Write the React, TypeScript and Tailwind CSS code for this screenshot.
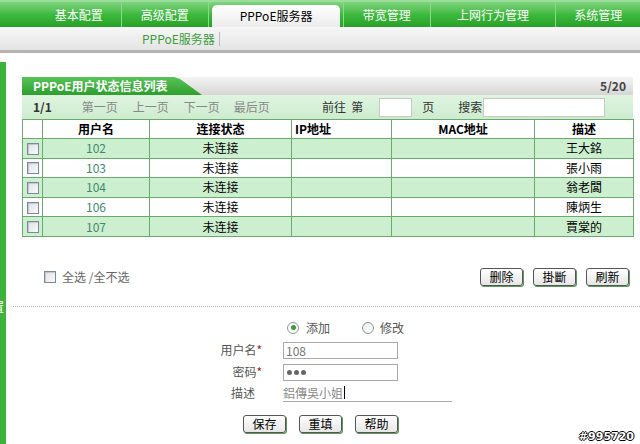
import React from "react";

const F = { fontFamily: '"Noto Sans CJK SC","Noto Sans",sans-serif' };

function Box() {
  return (
    <span className="inline-block w-[12px] h-[12px] border border-[#7a8a99] bg-gradient-to-br from-[#dfe3e8] to-[#f8f9fa] shadow-[inset_1px_1px_1px_rgba(0,0,0,0.15)]" />
  );
}

function Btn({ t }: { t: string }) {
  return (
    <button className="w-[43px] h-[18px] flex items-center justify-center text-[12px] leading-none text-black border border-[#555] rounded-[3px] bg-gradient-to-b from-white to-[#e6e6e6] shadow-[1px_1px_0_#5a9a5a]">
      {t}
    </button>
  );
}

const rows = [
  { u: "102", d: "王大銘", g: true },
  { u: "103", d: "張小雨", g: false },
  { u: "104", d: "翁老闆", g: true },
  { u: "106", d: "陳炳生", g: false },
  { u: "107", d: "賈棠的", g: true },
];

export default function App() {
  const tabs = [
    { t: "基本配置", w: "w-[123px] pl-[37px]" },
    { t: "高级配置", w: "w-[89px]" },
  ];
  return (
    <div className="relative w-[640px] h-[444px] overflow-hidden bg-white text-[12px]" style={F}>
      {/* top nav */}
      <div className="h-[27px] flex bg-gradient-to-b from-[#7fd37f] via-[#3dba3d] to-[#27a127] border-t-[2px] border-[#9adf9a]">
        {tabs.map((x) => (
          <div key={x.t} className={`${x.w} h-full flex items-center justify-center text-white text-[12px] border-r border-[#8ad88a]`}>
            {x.t}
          </div>
        ))}
        <div className="w-[130px] ml-[3px] mr-[3px] mt-[3px] rounded-t-[5px] bg-gradient-to-b from-white to-[#ececec] flex items-center justify-center text-black text-[12px]">
          PPPoE服务器
        </div>
        <div className="w-[89px] h-full flex items-center justify-center text-white text-[12px] border-l border-r border-[#8ad88a]">
          带宽管理
        </div>
        <div className="w-[128px] h-full flex items-center justify-center text-white text-[12px] border-r border-[#8ad88a]">
          上网行为管理
        </div>
        <div className="w-[85px] h-full flex items-center justify-center text-white text-[12px]">
          系统管理
        </div>
      </div>
      {/* sub nav */}
      <div className="h-[26px] flex items-center bg-gradient-to-b from-[#f7f7f7] to-[#e4e4e4] border-b-[3px] border-[#b4b4b4]">
        <span className="ml-[142px] text-[#3a9e3a] text-[12px]">PPPoE服务器</span>
        <span className="ml-[4px] w-px h-[14px] bg-[#bbb]" />
      </div>
      {/* body */}
      <div className="flex h-[391px]">
        <div className="w-[6px] mt-[9px] bg-[#3cb43c] overflow-hidden flex flex-col">
          <span className="mt-[12px] ml-[-7px] text-white text-[12px] leading-none">4</span>
          <span className="mt-[215px] ml-[-8px] text-white text-[12px] leading-none">置</span>
        </div>
        <div className="flex-1 flex flex-col">
          {/* panel */}
          <div className="ml-[16px] mt-[24px] w-[611px]">
            <div className="h-[18px] flex bg-gradient-to-b from-[#f4f4f4] to-[#d6d6d6]">
              <div
                className="w-[180px] h-full bg-gradient-to-b from-[#58c458] to-[#2c9f2c] text-white font-bold text-[12px] flex items-center pl-[11px]"
                style={{ clipPath: "polygon(0 0, 152px 0, 158px 2px, 180px 100%, 0 100%)" }}
              >
                PPPoE用户状态信息列表
              </div>
              <div className="flex-1 flex items-center justify-end pr-[7px] font-bold text-[#444]">5/20</div>
            </div>
            <div className="h-[24px] flex items-center bg-gradient-to-b from-[#dff4e0] to-[#cdeccf] text-[12px]">
              <span className="ml-[11px] font-bold text-[#333]">1/1</span>
              <span className="ml-[30px] text-[#888]">第一页</span>
              <span className="ml-[15px] text-[#888]">上一页</span>
              <span className="ml-[15px] text-[#888]">下一页</span>
              <span className="ml-[14px] text-[#888]">最后页</span>
              <span className="ml-[52px] text-[#333]">前往&nbsp;&nbsp;第</span>
              <span className="ml-[16px] w-[33px] h-[19px] bg-white border border-[#c8c8c8]" />
              <span className="ml-[10px] text-[#333]">页</span>
              <span className="ml-[24px] text-[#333]">搜索</span>
              <span className="ml-[1px] w-[122px] h-[19px] bg-white border border-[#c8c8c8]" />
            </div>
            <table className="w-[611px] border-collapse border border-[#6aaa6a] table-fixed">
              <colgroup>
                <col className="w-[20px]" />
                <col className="w-[107px]" />
                <col className="w-[142px]" />
                <col className="w-[100px]" />
                <col className="w-[143px]" />
                <col className="w-[99px]" />
              </colgroup>
              <thead>
                <tr className="h-[19px] bg-white">
                  {["", "用户名", "连接状态", "IP地址", "MAC地址", "描述"].map((h, i) => (
                    <th key={i} className={`border border-[#6aaa6a] p-0 font-bold text-[12px] text-black leading-none ${i === 3 ? "text-left pl-[3px]" : "text-center"}`}>
                      {h}
                    </th>
                  ))}
                </tr>
              </thead>
              <tbody>
                {rows.map((r) => (
                  <tr key={r.u} className={`h-[19.6px] ${r.g ? "bg-[#ccefcf]" : "bg-white"}`}>
                    <td className="border border-[#6aaa6a] p-0 text-center leading-none">
                      <span className="inline-flex mt-[2px]"><Box /></span>
                    </td>
                    <td className="border border-[#6aaa6a] p-0 text-center text-[#3f8a6c] leading-none">{r.u}</td>
                    <td className="border border-[#6aaa6a] p-0 text-center text-black leading-none">未连接</td>
                    <td className="border border-[#6aaa6a] p-0" />
                    <td className="border border-[#6aaa6a] p-0" />
                    <td className="border border-[#6aaa6a] p-0 text-center text-black leading-none">{r.d}</td>
                  </tr>
                ))}
              </tbody>
            </table>
            <div className="mt-[31px] h-[18px] flex items-center">
              <span className="ml-[22px] inline-flex"><Box /></span>
              <span className="ml-[6px] text-[#666]">全选 /全不选</span>
              <div className="ml-auto flex gap-[10px] mr-[4px]">
                <Btn t="删除" />
                <Btn t="掛斷" />
                <Btn t="刷新" />
              </div>
            </div>
          </div>
          {/* dotted divider */}
          <div className="ml-[7px] mt-[20px] border-t border-dotted border-[#a9b9a9]" />
          {/* radios */}
          <div className="mt-[14px] h-[14px] flex items-center pl-[281px] text-[#555]">
            <span className="w-[12px] h-[12px] rounded-full border border-[#8a9a8a] bg-white flex items-center justify-center">
              <span className="w-[5px] h-[5px] rounded-full bg-[#3c9a3c]" />
            </span>
            <span className="ml-[7px]">添加</span>
            <span className="ml-[32px] w-[12px] h-[12px] rounded-full border border-[#8a9a8a] bg-gradient-to-br from-[#e8ebee] to-white" />
            <span className="ml-[6px]">修改</span>
          </div>
          {/* form */}
          <div className="mt-[7px] flex flex-col text-[#555]">
            <div className="h-[17px] flex items-center">
              <span className="w-[256px] text-right">用户名<span className="text-[#b01818]">*</span></span>
              <span className="ml-[21px] w-[115px] h-[17px] border border-[#a9a9a9] bg-white text-[#777] pl-[2px] leading-[15px]">108</span>
            </div>
            <div className="mt-[5px] h-[17px] flex items-center">
              <span className="w-[256px] text-right">密码<span className="text-[#b01818]">*</span></span>
              <span className="ml-[21px] w-[115px] h-[17px] border border-[#a9a9a9] bg-white text-[#666] pl-[3px] flex items-center gap-[2px]">
                <span className="w-[5px] h-[5px] rounded-full bg-[#666]" />
                <span className="w-[5px] h-[5px] rounded-full bg-[#666]" />
                <span className="w-[5px] h-[5px] rounded-full bg-[#666]" />
              </span>
            </div>
            <div className="mt-[4px] h-[17px] flex items-center">
              <span className="w-[256px] text-right pr-[7px]">描述</span>
              <span className="ml-[21px] w-[169px] h-[17px] border-b border-[#a9a9a9] text-[#888] flex items-center">
                鋁傳吳小姐<span className="w-px h-[13px] bg-black ml-[1px]" />
              </span>
            </div>
          </div>
          <div className="mt-[13px] flex pl-[237px] gap-[13px]">
            <Btn t="保存" />
            <Btn t="重填" />
            <Btn t="帮助" />
          </div>
        </div>
      </div>
      <span className="absolute right-[6px] bottom-[2px] text-white font-bold text-[11px] leading-none [text-shadow:-1px_0_#000,1px_0_#000,0_-1px_#000,0_1px_#000]" style={{ fontFamily: '"DejaVu Sans",sans-serif' }}>
        #995720
      </span>
    </div>
  );
}
